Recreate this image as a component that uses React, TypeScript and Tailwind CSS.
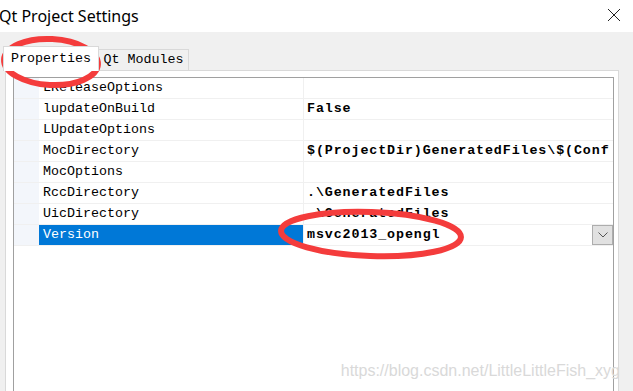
import React from 'react';

const rows = [
  { name: 'LReleaseOptions', value: '' },
  { name: 'lupdateOnBuild', value: 'False' },
  { name: 'LUpdateOptions', value: '' },
  { name: 'MocDirectory', value: '$(ProjectDir)GeneratedFiles\\$(Conf' },
  { name: 'MocOptions', value: '' },
  { name: 'RccDirectory', value: '.\\GeneratedFiles' },
  { name: 'UicDirectory', value: '.\\GeneratedFiles' },
  { name: 'Version', value: 'msvc2013_opengl', selected: true },
];

const mono = { fontFamily: '"Liberation Mono", "DejaVu Sans Mono", monospace' };

const App = () => {
  return (
    <div className="relative w-[633px] h-[391px] overflow-hidden bg-[#f0f0f0]">
      {/* title bar */}
      <div className="flex h-[32px] items-center justify-between bg-white pr-[12px]">
        <span className="-ml-[1px] text-[16px] text-black" style={{ fontFamily: '"Noto Sans", sans-serif' }}>
          Qt Project Settings
        </span>
        <svg width="14" height="14" viewBox="0 0 14 14" className="mb-[2px]">
          <path d="M1 1L13 13M13 1L1 13" stroke="#222" strokeWidth="1" />
        </svg>
      </div>

      {/* tabs */}
      <div className="flex h-[38px] items-end pl-[3px]" style={mono}>
        <div className="relative z-10 -mb-px flex h-[25px] w-[96px] items-center justify-center border border-b-0 border-[#d9d9d9] bg-white text-[13.33px] text-black">
          Properties
        </div>
        <div className="flex h-[21px] w-[90px] items-center justify-center border border-b-0 border-l-0 border-[#d9d9d9] bg-[#f0f0f0] text-[13.33px] text-black">
          Qt Modules
        </div>
      </div>

      {/* tab page */}
      <div className="ml-[5px] h-[330px] w-[614px] border border-[#d9d9d9] bg-white pl-[7px] pr-[4px] pt-[6px]">
        <div className="h-full border-l border-r border-t border-[#a0a0a0]" style={mono}>
          {rows.map((row) => (
            <div key={row.name} className="flex h-[21px] border-b border-[#f0f0f0]">
              <div className="w-[25px] shrink-0 bg-[#f3f6fb]" />
              <div
                className={`flex w-[265px] shrink-0 items-center border-r border-[#f0f0f0] pl-[4px] text-[13.33px] ${
                  row.selected ? 'bg-[#0078d7] text-white' : 'text-black'
                }`}
              >
                {row.name}
              </div>
              <div className="relative flex min-w-0 flex-1 items-center whitespace-nowrap pl-[3px] text-[13.33px] font-bold tracking-[0.9px] text-black">
                {row.value}
                {row.selected && (
                  <div className="absolute right-0 top-0 flex h-[20px] w-[21px] items-center justify-center border border-[#adadad] bg-[#e1e1e1]">
                    <svg width="10" height="6" viewBox="0 0 10 6">
                      <path d="M0.5 0.5L5 5L9.5 0.5" fill="none" stroke="#555" strokeWidth="1" />
                    </svg>
                  </div>
                )}
              </div>
            </div>
          ))}
        </div>
      </div>

      {/* watermark */}
      <div
        className="absolute bottom-[8px] right-[13px] text-[16px] text-[#d9d9d9]"
        style={{ fontFamily: '"Liberation Sans", Arial, sans-serif' }}
      >
        https://blog.csdn.net/LittleLittleFish_xyg
      </div>

      {/* annotation ellipses */}
      <svg className="pointer-events-none absolute left-0 top-0" width="633" height="391">
        <ellipse cx="51" cy="62" rx="47" ry="23" transform="rotate(3 51 62)" fill="none" stroke="#f43c3c" strokeWidth="6" />
        <ellipse cx="371" cy="234" rx="90" ry="22" transform="rotate(2 371 234)" fill="none" stroke="#f43c3c" strokeWidth="6" />
      </svg>
    </div>
  );
};

export default App;
